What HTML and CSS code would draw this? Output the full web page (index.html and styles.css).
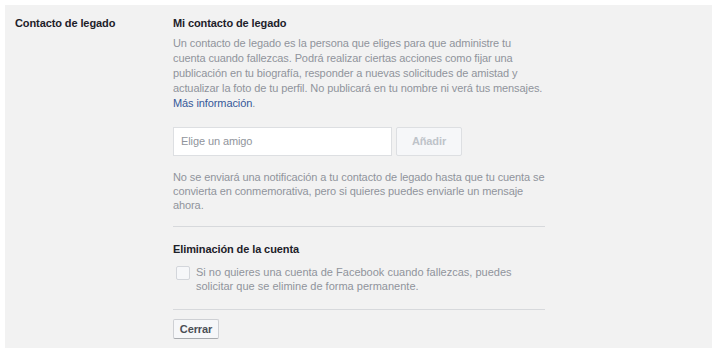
FILE: index.html
```html
<!DOCTYPE html>
<html lang="es">
<head>
<meta charset="utf-8">
<link rel="stylesheet" href="styles.css">
</head>
<body>
<div class="panel">
  <div class="label">Contacto de legado</div>
  <div class="content">
    <div class="heading">Mi contacto de legado</div>
    <p class="desc">Un contacto de legado es la persona que eliges para que administre tu cuenta cuando fallezcas. Podrá realizar ciertas acciones como fijar una publicación en tu biografía, responder a nuevas solicitudes de amistad y actualizar la foto de tu perfil. No publicará en tu nombre ni verá tus mensajes. <a class="link" href="#">Más información</a>.</p>
    <div class="picker">
      <div class="input">Elige un amigo</div>
      <div class="btn-add">Añadir</div>
    </div>
    <p class="note">No se enviará una notificación a tu contacto de legado hasta que tu cuenta se convierta en conmemorativa, pero si quieres puedes enviarle un mensaje ahora.</p>
    <div class="divider"></div>
    <div class="heading heading2">Eliminación de la cuenta</div>
    <div class="check-row">
      <span class="checkbox"></span>
      <span class="check-text">Si no quieres una cuenta de Facebook cuando fallezcas, puedes solicitar que se elimine de forma permanente.</span>
    </div>
    <div class="divider divider2"></div>
    <div class="btn-close">Cerrar</div>
  </div>
</div>
</body>
</html>
```
FILE: styles.css
```css
html, body {
  margin: 0;
  padding: 0;
  background: #ffffff;
  font-family: "Liberation Sans", Arial, Helvetica, sans-serif;
  font-size: 11px;
  letter-spacing: -0.1px;
}
.panel {
  margin: 5px 0 0 5px;
  width: 707px;
  height: 343px;
  box-sizing: border-box;
  background: #f2f2f2;
  padding: 10px 0 0 10px;
  display: flex;
}
.label {
  width: 158px;
  font-weight: bold;
  color: #1d2129;
  line-height: 16px;
}
.content {
  width: 372px;
}
.heading {
  font-weight: bold;
  color: #1d2129;
  line-height: 16px;
}
.desc {
  margin: 5px 0 0 0;
  color: #90949c;
  line-height: 15px;
}
.link {
  color: #365899;
  text-decoration: none;
}
.picker {
  margin-top: 16px;
  display: flex;
  gap: 4px;
}
.input {
  width: 219px;
  height: 29px;
  box-sizing: border-box;
  background: #ffffff;
  border: 1px solid #dddfe2;
  padding: 0 7px;
  line-height: 27px;
  color: #90949c;
}
.btn-add {
  width: 66px;
  height: 29px;
  box-sizing: border-box;
  background: #f6f7f9;
  border: 1px solid #dddfe2;
  border-radius: 2px;
  color: #bec3c9;
  font-weight: bold;
  text-align: center;
  line-height: 27px;
}
.note {
  margin: 14px 0 0 0;
  color: #90949c;
  line-height: 14px;
}
.divider {
  margin-top: 14px;
  height: 1px;
  background: #d7d9dc;
}
.heading2 {
  margin-top: 14px;
}
.check-row {
  margin-top: 8px;
  display: flex;
  align-items: flex-start;
}
.checkbox {
  flex: none;
  width: 12px;
  height: 12px;
  margin: 1px 6px 0 3px;
  border: 1px solid #d3d6db;
  border-radius: 2px;
  background: #f6f7f9;
}
.check-text {
  width: 325px;
  color: #90949c;
  line-height: 14px;
  letter-spacing: 0;
}
.divider2 {
  margin-top: 16px;
}
.btn-close {
  margin-top: 9px;
  display: inline-block;
  width: 46px;
  height: 20px;
  box-sizing: border-box;
  background: #f6f7f9;
  border: 1px solid #ced0d4;
  border-bottom-color: #a8abaf;
  border-radius: 2px;
  color: #4b4f56;
  font-weight: bold;
  text-align: center;
  line-height: 18px;
}
```
